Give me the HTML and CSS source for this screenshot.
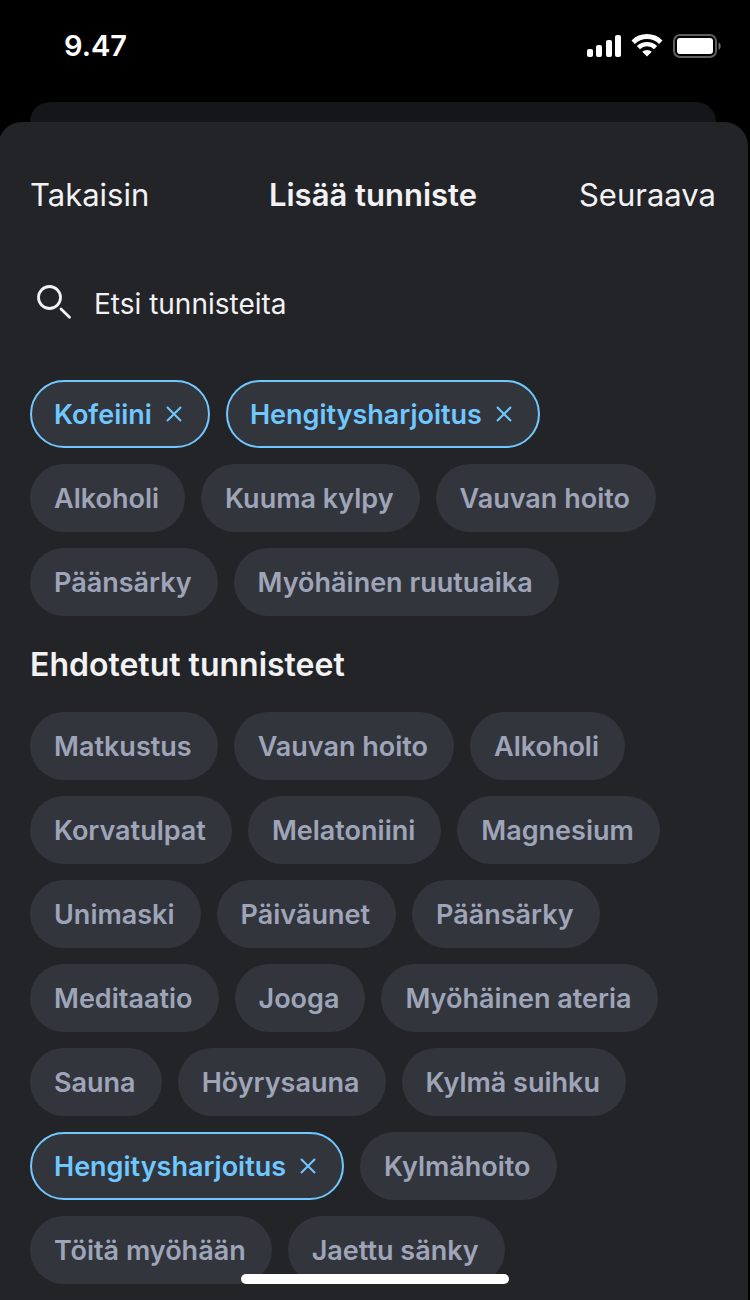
FILE: index.html
```html
<!DOCTYPE html>
<html lang="fi">
<head>
    <meta charset="UTF-8">
    <meta name="viewport" content="width=device-width, initial-scale=1.0">
    <title>Lisää tunniste</title>
    <link rel="stylesheet" href="styles.css">
</head>
<body>
    <div class="status-bar">
        <span class="time">9.47</span>
        <div class="status-icons">
            <svg width="34" height="22" viewBox="0 0 34 22" fill="#fff">
                <rect x="0" y="14" width="6" height="8" rx="2"/>
                <rect x="9" y="10" width="6" height="12" rx="2"/>
                <rect x="19" y="5" width="6" height="17" rx="2"/>
                <rect x="28" y="0" width="6" height="22" rx="2"/>
            </svg>
            <svg width="32" height="24" viewBox="0 0 32 24">
                <path d="M2.200 8.200a19.600 19.600 0 0 1 27.600 0" fill="none" stroke="#fff" stroke-width="4.800"/>
                <path d="M7.400 13.600a12.300 12.300 0 0 1 17.200 0" fill="none" stroke="#fff" stroke-width="4.400"/>
                <path d="M16 22.600l-4.800-4.800a7 7 0 0 1 9.600 0z" fill="#fff"/>
            </svg>
            <svg width="49" height="24" viewBox="0 0 49 24">
                <rect x="1" y="1" width="42" height="22" rx="6" fill="none" stroke="#5e5e5e" stroke-width="2"/>
                <rect x="4" y="4" width="36" height="16" rx="3" fill="#fff"/>
                <path d="M45.500 8.200c2.900 1.400 2.900 6.200 0 7.600z" fill="#6b6b6b"/>
            </svg>
        </div>
    </div>

    <div class="sheet-behind"></div>
    <main class="sheet">
        <header class="sheet-header">
            <button class="nav-btn" type="button">Takaisin</button>
            <h1>Lisää tunniste</h1>
            <button class="nav-btn nav-next" type="button">Seuraava</button>
        </header>

        <div class="search">
            <label for="haku" aria-label="Etsi tunnisteita">
                <svg width="36" height="36" viewBox="0 0 36 36" fill="none" stroke="#f2f2f4">
                    <circle cx="13.5" cy="13.5" r="11" stroke-width="2.8"/>
                    <path d="M25 25l8.500 8.200" stroke-width="2.8" stroke-linecap="round"/>
                </svg>
            </label>
            <input type="text" id="haku" placeholder="Etsi tunnisteita">
        </div>

        <div class="tags">
            <button class="tag selected" type="button">Kofeiini <svg class="close" viewBox="0 0 16 16"><path d="M1 1l14 14M15 1L1 15"/></svg></button>
            <button class="tag selected" type="button">Hengitysharjoitus <svg class="close" viewBox="0 0 16 16"><path d="M1 1l14 14M15 1L1 15"/></svg></button>
        </div>
        <div class="tags">
            <button class="tag" type="button">Alkoholi</button>
            <button class="tag" type="button">Kuuma kylpy</button>
            <button class="tag" type="button">Vauvan hoito</button>
            <button class="tag" type="button">Päänsärky</button>
            <button class="tag" type="button">Myöhäinen ruutuaika</button>
        </div>

        <h2>Ehdotetut tunnisteet</h2>
        <div class="tags">
            <button class="tag" type="button">Matkustus</button>
            <button class="tag" type="button">Vauvan hoito</button>
            <button class="tag" type="button">Alkoholi</button>
            <button class="tag" type="button">Korvatulpat</button>
            <button class="tag" type="button">Melatoniini</button>
            <button class="tag" type="button">Magnesium</button>
            <button class="tag" type="button">Unimaski</button>
            <button class="tag" type="button">Päiväunet</button>
            <button class="tag" type="button">Päänsärky</button>
            <button class="tag" type="button">Meditaatio</button>
            <button class="tag" type="button">Jooga</button>
            <button class="tag" type="button">Myöhäinen ateria</button>
            <button class="tag" type="button">Sauna</button>
            <button class="tag" type="button">Höyrysauna</button>
            <button class="tag" type="button">Kylmä suihku</button>
            <button class="tag selected" type="button">Hengitysharjoitus <svg class="close" viewBox="0 0 16 16"><path d="M1 1l14 14M15 1L1 15"/></svg></button>
            <button class="tag" type="button">Kylmähoito</button>
            <button class="tag" type="button">Töitä myöhään</button>
            <button class="tag" type="button">Jaettu sänky</button>
        </div>
    </main>
    <div class="home-indicator"></div>
</body>
</html>
```
FILE: styles.css
```css
* { box-sizing: border-box; }
body { margin: 0; min-height: 100vh; display: flex; flex-direction: column; background: #000; color: #f2f2f4; font-family: Inter, "Liberation Sans", sans-serif; }
button { margin: 0; border: none; font-family: inherit; cursor: pointer; }

.status-bar { display: flex; justify-content: space-between; align-items: center; height: 102px; padding: 0 28px 12px 64px; }
.time { font-size: 29px; font-weight: 600; color: #fff; }
.status-icons { display: flex; align-items: center; gap: 10px; padding-top: 2px; }

.sheet-behind { height: 20px; margin: 0 34px 0 30px; border-radius: 20px 20px 0 0; background: #151619; }
.sheet { flex: 1; margin: 0 2px 0 -2px; padding: 48px 32px 16px; border-radius: 24px 24px 0 0; background: #232428; }
.sheet-header { display: grid; grid-template-columns: 1fr auto 1fr; align-items: center; height: 50px; }
.nav-btn { padding: 0; background: none; color: #f2f2f4; font-size: 31px; line-height: 40px; text-align: left; }
.nav-next { text-align: right; }
h1, h2 { margin: 0; font-size: 31px; font-weight: 600; line-height: 40px; }

.search { display: flex; align-items: center; gap: 22px; height: 68px; margin: 50px 0 42px; padding-left: 6px; }
.search label { display: flex; padding-bottom: 4px; }
.search input { flex: 1; min-width: 0; padding: 0; border: none; outline: none; background: none; color: #f2f2f4; font-family: inherit; font-size: 28px; line-height: 36px; }
.search input::placeholder { color: #f2f2f4; opacity: 1; }

.tags { display: flex; flex-wrap: wrap; gap: 16px; margin-bottom: 16px; }
.tag { display: flex; align-items: center; gap: 14px; height: 68px; padding: 0 26px 0 24px; border-radius: 34px; background: #33353d; color: #9fa5b9; font-size: 27px; font-weight: 600; }
.tag.selected { border: 2px solid #6fc8ff; color: #6fc8ff; padding: 0 26px 0 22px; }
.close { width: 16px; height: 16px; fill: none; stroke: currentColor; stroke-width: 2; }
h2 { margin: 29px 0 27px; font-size: 32px; }
.tags:last-child { margin-bottom: 0; }

.home-indicator { position: fixed; bottom: 16px; left: 50%; width: 268px; height: 10px; margin-left: -134px; border-radius: 5px; background: #fff; }
```
